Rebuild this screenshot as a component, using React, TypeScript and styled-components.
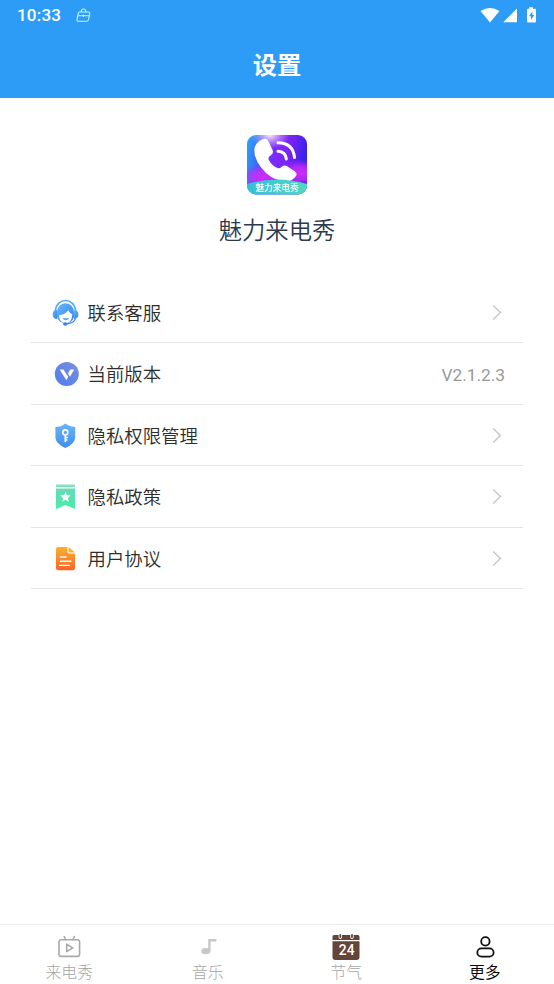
import React from "react";
import styled, { createGlobalStyle } from "styled-components";

const GlobalStyle = createGlobalStyle`
  * { box-sizing: border-box; }
  body {
    margin: 0;
    background: #fff;
    font-family: Roboto, "Noto Sans CJK SC", sans-serif;
  }
  svg { display: block; flex: none; }
`;

const Screen = styled.div`
  width: 554px;
  height: 984px;
  display: flex;
  flex-direction: column;
  overflow: hidden;
`;

const Header = styled.header`
  height: 98px;
  flex: none;
  background: #2d9cf6;
  color: #fff;
`;

const StatusBar = styled.div`
  height: 31px;
  padding: 0 16px 0 17px;
  display: flex;
  align-items: center;
`;

const Clock = styled.span`
  font-size: 17px;
  font-weight: 500;
  line-height: 31px;
  width: 58px;
  letter-spacing: 0.2px;
`;

const StatusIcons = styled.div`
  margin-left: auto;
  display: flex;
`;

const Title = styled.h1`
  margin: 0;
  font-size: 24.3px;
  font-weight: 700;
  line-height: 69px;
  text-align: center;
`;

const Main = styled.main`
  flex: 1;
  display: flex;
  flex-direction: column;
  align-items: center;
  padding-top: 37px;
`;

const AppName = styled.div`
  margin-top: 18px;
  font-size: 23.3px;
  font-weight: 350;
  line-height: 36px;
  color: #2c3a4b;
`;

const List = styled.div`
  width: 492px;
  margin-top: 32.6px;
`;

const Row = styled.div`
  height: 61.5px;
  padding: 2px 19px 0 19px;
  display: flex;
  align-items: center;
  border-bottom: 1px solid #e4e4e4;
`;

const RowLabel = styled.span`
  margin: 2px 0 0 7.5px;
  flex: 1;
  font-size: 18.4px;
  font-weight: 350;
  line-height: 28px;
  color: #2d2d2d;
`;

const Version = styled.span`
  font-size: 17.3px;
  color: #999;
  line-height: 24px;
  margin: 1px -1px 0 0;
`;

const Nav = styled.nav`
  height: 60px;
  flex: none;
  border-top: 1px solid #ececec;
  display: grid;
  grid-template-columns: repeat(4, 1fr);
`;

const Tab = styled.div<{ $active?: boolean }>`
  display: flex;
  flex-direction: column;
  align-items: center;
  padding-top: 7px;
  font-size: 15.8px;
  line-height: 26px;
  font-weight: ${(p) => (p.$active ? 350 : 300)};
  color: ${(p) => (p.$active ? "#000" : "#a6a6a6")};
`;

const AppLogo = () => (
  <svg width="60" height="60" viewBox="0 0 60 60">
    <defs>
      <linearGradient id="logoBase" x1="0" y1="0.2" x2="1" y2="0.4">
        <stop offset="0" stopColor="#28a2f8" />
        <stop offset="0.2" stopColor="#3b6cf8" />
        <stop offset="0.45" stopColor="#7a2cfa" />
        <stop offset="0.7" stopColor="#7a22f5" />
        <stop offset="1" stopColor="#2a22ea" />
      </linearGradient>
      <radialGradient id="logoPink">
        <stop offset="0" stopColor="#d42cf8" />
        <stop offset="0.5" stopColor="#c62cf8" stopOpacity="0.8" />
        <stop offset="1" stopColor="#b020f5" stopOpacity="0" />
      </radialGradient>
      <radialGradient id="logoGlow">
        <stop offset="0" stopColor="#ffe5fa" />
        <stop offset="1" stopColor="#e0a0fa" stopOpacity="0" />
      </radialGradient>
      <linearGradient id="logoBand">
        <stop offset="0" stopColor="#35bfd8" />
        <stop offset="1" stopColor="#50d8bc" />
      </linearGradient>
      <clipPath id="logoClip"><rect width="60" height="59.5" rx="9" /></clipPath>
    </defs>
    <g clipPath="url(#logoClip)">
      <rect width="60" height="60" fill="url(#logoBase)" />
      <ellipse cx="16" cy="42" rx="22" ry="13" fill="url(#logoPink)" />
      <ellipse cx="54" cy="38" rx="22" ry="14" fill="url(#logoPink)" />
      <ellipse cx="23" cy="0" rx="20" ry="14" fill="url(#logoGlow)" />
      <path d="M7.5 13Q9 7 15 4.5Q20 2.5 21.5 6.5L25.5 15Q27 18.5 23.5 20.5Q20.5 22.5 21.8 25Q25 31 30.5 33Q33 34 35 31.5Q37.5 29.5 40.5 31.5L48 36.5Q50.5 38.5 49 41Q45 46.5 39 46.5Q28 46 19 38Q6 25 7.5 13Z" fill="#fff" />
      <path d="M31 7.8Q46 8 47.5 22.5M31 16.3Q38.5 16.5 39.3 24" fill="none" stroke="#fff" strokeWidth="3" strokeLinecap="round" />
      <path d="M0 49Q30 40 60 49V60H0Z" fill="url(#logoBand)" />
      <text x="30" y="56" fontSize="8.6" fontWeight="500" fill="#fff" textAnchor="middle">魅力来电秀</text>
    </g>
  </svg>
);

const SupportIcon = () => (
  <svg width="30" height="30" viewBox="0 0 30 30">
    <defs><linearGradient id="support" x2="1" y2="1"><stop stopColor="#62b8fa" /><stop offset="1" stopColor="#3882ee" /></linearGradient></defs>
    <path d="M5.3 13C6.5 -1 24.5 -1 25.7 13" fill="none" stroke="#54aaf5" strokeWidth="1.6" />
    <path d="M7 11.8V21Q2.6 20.5 2.6 16.4Q2.6 12.3 7 11.8Z" fill="url(#support)" />
    <path d="M24 11.8V21Q28.4 20.5 28.4 16.4Q28.4 12.3 24 11.8Z" fill="url(#support)" />
    <path d="M7 15.5C6.5 1.7 24.5 1.7 24 15.5V19Q22 25.2 15.5 25.2Q9 25.2 7 19Z" fill="url(#support)" />
    <path d="M9 17.3Q15 16.5 18.3 12.2Q19.5 15 22.3 16.2Q22 24.8 15.6 25.3Q9.4 24.8 9 17.3Z" fill="#fff" />
    <path d="M12.8 20.6Q16 23.6 18.8 20.6Z" fill="#559ff3" stroke="#559ff3" strokeWidth="0.5" />
    <path d="M25.5 20.5Q24 25.2 17 25.8" fill="none" stroke="#4586ef" strokeWidth="1.2" />
    <ellipse cx="15.2" cy="26" rx="2.2" ry="1.7" fill="#3b7eea" />
  </svg>
);

const VersionIcon = () => (
  <svg width="30" height="30" viewBox="0 0 30 30">
    <defs><linearGradient id="version" x1="1" y1="0" x2="0" y2="1"><stop stopColor="#7b91db" /><stop offset="1" stopColor="#507af3" /></linearGradient></defs>
    <circle cx="16.8" cy="15.1" r="12" fill="url(#version)" />
    <path d="M9.6 10.5H13.4L18.2 17.7L16.4 21.3Z" fill="#fff" />
    <path d="M20.2 10.5H24.2L20 17.7L18 14.4Z" fill="#fff" />
  </svg>
);

const ShieldIcon = () => (
  <svg width="30" height="30" viewBox="0 0 30 30">
    <defs><linearGradient id="shield" x2="0" y2="1"><stop stopColor="#68b6fa" /><stop offset="1" stopColor="#438bec" /></linearGradient></defs>
    <path d="M15.3 2.5Q20 6.1 25.2 6V16.5Q24.7 23 15.3 27Q6 23 5.4 16.5V6Q11 6.1 15.3 2.5Z" fill="url(#shield)" />
    <g fill="none" stroke="#fff" strokeWidth="1.6"><circle cx="15.3" cy="11.4" r="2.5" /><path d="M15.3 14V21M15.3 16.5H18M15.3 19H17.5" /></g>
  </svg>
);

const PolicyIcon = () => (
  <svg width="30" height="30" viewBox="0 0 30 30">
    <defs><linearGradient id="policy" x2="0" y2="1"><stop stopColor="#69dab5" /><stop offset="1" stopColor="#45edaa" /></linearGradient></defs>
    <rect x="6" y="2.5" width="19" height="2.7" fill="#84dfc0" />
    <path d="M6 6.5H25V27L15.5 23L6 27Z" fill="url(#policy)" />
    <path d="M15.5 9.8L17 13.3L20.7 13.6L17.9 16L18.8 19.7L15.5 17.7L12.2 19.7L13.1 16L10.3 13.6L14 13.3Z" fill="#fff" />
  </svg>
);

const AgreementIcon = () => (
  <svg width="30" height="30" viewBox="0 0 30 30">
    <defs><linearGradient id="agreement" x2="0" y2="1"><stop stopColor="#fbb02f" /><stop offset="1" stopColor="#fa642a" /></linearGradient></defs>
    <path d="M8 3H17.3V7.5Q17.3 9.6 19.5 9.6H25V24Q25 26.3 22.7 26.3H8.3Q6 26.3 6 24V5Q6 3 8 3Z" fill="url(#agreement)" />
    <path d="M18.5 3L25 8.5H20Q18.5 8.5 18.5 7Z" fill="#fbb02f" />
    <path d="M10.4 13H16M10.4 17.2H21M9.6 21.4H19.5" stroke="#fff" strokeWidth="1.4" strokeLinecap="round" />
  </svg>
);

const Chevron = () => (
  <svg width="14" height="18" viewBox="0 0 14 18">
    <path d="M3.2 1.6L10.4 8.6L3.2 15.6" fill="none" stroke="#c6c6c6" strokeWidth="1.4" />
  </svg>
);

const ROWS = [
  { label: "联系客服", Icon: SupportIcon },
  { label: "当前版本", Icon: VersionIcon, value: "V2.1.2.3" },
  { label: "隐私权限管理", Icon: ShieldIcon },
  { label: "隐私政策", Icon: PolicyIcon },
  { label: "用户协议", Icon: AgreementIcon },
];

const VideoIcon = () => (
  <svg width="30" height="28" viewBox="0 0 30 28" fill="none" stroke="#a9a9a9" strokeWidth="1.6" strokeLinejoin="round" strokeLinecap="round">
    <rect x="5" y="7.8" width="20.6" height="16.6" rx="2.2" />
    <path d="M10.2 4.5L11.7 7.5M20.4 4.5L18.9 7.5M12.7 12.2V19.6L18.8 15.9Z" />
  </svg>
);

const MusicIcon = () => (
  <svg width="30" height="28" viewBox="0 0 30 28">
    <ellipse cx="12.8" cy="19.1" rx="4.6" ry="3.2" fill="#c8c8c8" />
    <path d="M16.4 19.3V8.2H23.4" stroke="#c8c8c8" strokeWidth="2.4" fill="none" />
  </svg>
);

const CalendarIcon = () => (
  <svg width="30" height="28" viewBox="0 0 30 28">
    <path d="M4 3H26A2 2 0 0 1 28.5 5V8H1.5V5A2 2 0 0 1 4 3Z" fill="#65443a" />
    <path d="M1.5 9.2H28.5V25Q28.5 28 25.5 28H4.5Q1.5 28 1.5 25Z" fill="#65443a" />
    <path d="M9.3 3V5.2M21 3V5.2" stroke="#fff" strokeWidth="3.4" strokeLinecap="round" />
    <path d="M9.3 3V5M21 3V5" stroke="#65443a" strokeWidth="1.8" strokeLinecap="round" />
    <text x="15.8" y="23.3" textAnchor="middle" fontSize="13.8" fontWeight="500" letterSpacing="0.3" fill="#fff">24</text>
  </svg>
);

const PersonIcon = () => (
  <svg width="30" height="28" viewBox="0 0 30 28" fill="none" stroke="#111" strokeWidth="1.8">
    <circle cx="15.4" cy="9.4" r="4.2" />
    <rect x="7.3" y="16.3" width="16.3" height="8.4" rx="4.2" />
  </svg>
);

export default function App() {
  return (
    <>
      <GlobalStyle />
      <Screen>
        <Header>
          <StatusBar>
            <Clock>10:33</Clock>
            <svg width="17" height="18" viewBox="0 0 17 18" fill="none" stroke="#c8f2ff" strokeWidth="1.1" strokeLinejoin="round">
              <path d="M4.5 5H13.5Q15 5 14.7 7L13.5 12.6Q13.1 14.2 11.7 14.2H3.3Q1.7 14.2 2 12.7L3.3 6.2Q3.6 5 4.5 5ZM6.2 5Q6.2 2 8.6 2Q11 2 11 5M3 8.8H14M8.4 7.5V10" />
            </svg>
            <StatusIcons>
              <svg width="58" height="18" viewBox="0 0 58 18" fill="#fff">
                <path d="M0.5 4Q10 -2.2 19.5 4L10 15.5Z" />
                <path d="M37 1.5V15.2H23.3Z" />
                <path d="M49.2 1.8V0.2H53V1.8H55Q56 1.8 56 2.8V14.5Q56 15.5 55 15.5H48Q47 15.5 47 14.5V2.8Q47 1.8 48 1.8Z" />
                <path d="M52.4 4.3L49 9.3H51V13L54.3 8H52.4Z" fill="#2d9cf6" />
              </svg>
            </StatusIcons>
          </StatusBar>
          <Title>设置</Title>
        </Header>
        <Main>
          <AppLogo />
          <AppName>魅力来电秀</AppName>
          <List>
            {ROWS.map(({ label, Icon, value }) => (
              <Row key={label}>
                <Icon />
                <RowLabel>{label}</RowLabel>
                {value ? <Version>{value}</Version> : <Chevron />}
              </Row>
            ))}
          </List>
        </Main>
        <Nav>
          <Tab><VideoIcon />来电秀</Tab>
          <Tab><MusicIcon />音乐</Tab>
          <Tab><CalendarIcon />节气</Tab>
          <Tab $active><PersonIcon />更多</Tab>
        </Nav>
      </Screen>
    </>
  );
}
